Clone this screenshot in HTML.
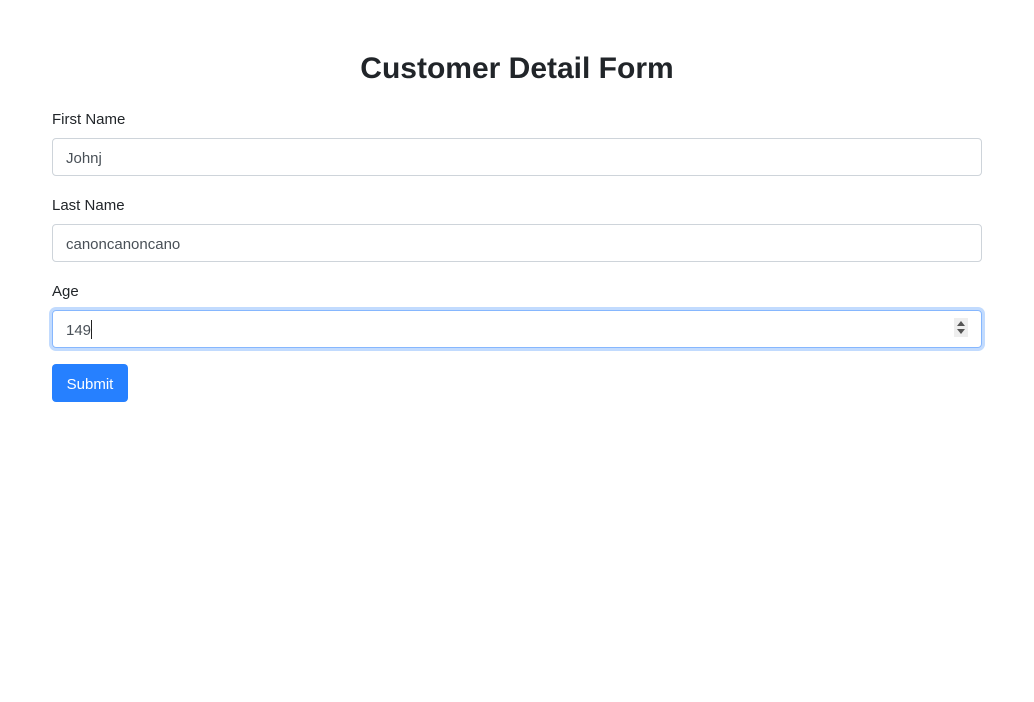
<!DOCTYPE html>
<html><head><meta charset="utf-8"><style>
*{box-sizing:border-box;margin:0;padding:0}
body{width:1034px;height:702px;background:#fff;font-family:"Liberation Sans",sans-serif;color:#212529;font-size:15px;position:relative}
h1{position:absolute;top:52px;left:0;width:1034px;text-align:center;font-size:30px;font-weight:bold;color:#212529}
.l{position:absolute;left:52px;font-size:15px}
.i{position:absolute;left:52px;width:930px;height:38px;border:1px solid #ced4da;border-radius:4px;padding-left:13px;padding-top:2px;line-height:36px;font-size:15px;color:#495057}
.f{border-color:#86b7fe;box-shadow:0 0 0 3px rgba(13,110,253,.25)}
.cur{display:inline-block;width:1px;height:19px;background:#222;vertical-align:middle;margin-top:-3px}
.sp{position:absolute;right:13px;top:9px;width:14px;height:19px;background:#eee}
.sp:before{content:"";position:absolute;left:3px;top:3px;border-left:4px solid transparent;border-right:4px solid transparent;border-bottom:5px solid #555}
.sp:after{content:"";position:absolute;left:3px;top:11px;border-left:4px solid transparent;border-right:4px solid transparent;border-top:5px solid #555}
.b{position:absolute;left:52px;top:364px;width:76px;height:38px;background:#2680ff;color:#fff;border-radius:4px;text-align:center;line-height:41px;font-size:15px}
</style></head><body>
<h1>Customer Detail Form</h1>
<div class="l" style="top:111px">First Name</div>
<div class="i" style="top:138px">Johnj</div>
<div class="l" style="top:197px">Last Name</div>
<div class="i" style="top:224px">canoncanoncano</div>
<div class="l" style="top:283px">Age</div>
<div class="i f" style="top:310px">149<span class="cur"></span><div class="sp" style="top:7px"></div></div>
<div class="b">Submit</div>
</body></html>
